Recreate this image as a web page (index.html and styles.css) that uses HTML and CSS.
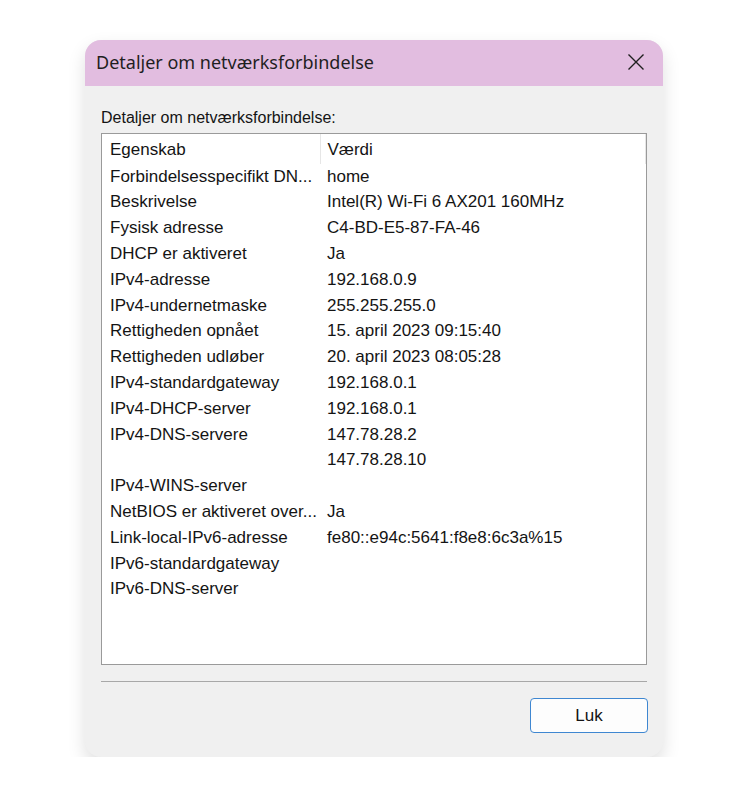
FILE: index.html
```html
<!DOCTYPE html>
<html lang="da">
<head>
  <meta charset="UTF-8" />
  <title>Detaljer om netværksforbindelse</title>
  <link rel="stylesheet" href="styles.css">
</head>
<body>
  <div class="dialog">
    <div class="titlebar">
      <span class="title">Detaljer om netværksforbindelse</span>
      <svg class="close" width="18" height="18" viewBox="0 0 18 18">
        <path d="M1.5 1.5 L16.5 16.5 M16.5 1.5 L1.5 16.5" stroke="#1f1f1f" stroke-width="1.4" fill="none"/>
      </svg>
    </div>
    <div class="content">
      <div class="label">Detaljer om netværksforbindelse:</div>
      <div class="listbox">
        <table class="details">
          <colgroup>
            <col class="col-prop">
            <col class="col-val">
          </colgroup>
          <thead>
            <tr><th>Egenskab</th><th>Værdi</th></tr>
          </thead>
          <tbody>
            <tr><td>Forbindelsesspecifikt DN...</td><td>home</td></tr>
            <tr><td>Beskrivelse</td><td>Intel(R) Wi-Fi 6 AX201 160MHz</td></tr>
            <tr><td>Fysisk adresse</td><td>C4-BD-E5-87-FA-46</td></tr>
            <tr><td>DHCP er aktiveret</td><td>Ja</td></tr>
            <tr><td>IPv4-adresse</td><td>192.168.0.9</td></tr>
            <tr><td>IPv4-undernetmaske</td><td>255.255.255.0</td></tr>
            <tr><td>Rettigheden opnået</td><td>15. april 2023 09:15:40</td></tr>
            <tr><td>Rettigheden udløber</td><td>20. april 2023 08:05:28</td></tr>
            <tr><td>IPv4-standardgateway</td><td>192.168.0.1</td></tr>
            <tr><td>IPv4-DHCP-server</td><td>192.168.0.1</td></tr>
            <tr><td>IPv4-DNS-servere</td><td>147.78.28.2</td></tr>
            <tr><td></td><td>147.78.28.10</td></tr>
            <tr><td>IPv4-WINS-server</td><td></td></tr>
            <tr><td>NetBIOS er aktiveret over...</td><td>Ja</td></tr>
            <tr><td>Link-local-IPv6-adresse</td><td>fe80::e94c:5641:f8e8:6c3a%15</td></tr>
            <tr><td>IPv6-standardgateway</td><td></td></tr>
            <tr><td>IPv6-DNS-server</td><td></td></tr>
          </tbody>
        </table>
      </div>
      <div class="separator"></div>
      <div class="buttons">
        <button class="btn">Luk</button>
      </div>
    </div>
  </div>
</body>
</html>
```

FILE: styles.css
```css
body {
  margin: 0;
  background-color: #ffffff;
  font-family: "Liberation Sans", Arial, sans-serif;
  color: #141414;
}

.dialog {
  width: 578px;
  margin: 40px 0 0 85px;
  background-color: #f0f0f0;
  border-radius: 16px;
  overflow: hidden;
  box-shadow: 0 8px 18px rgba(0, 0, 0, 0.13);
}

.titlebar {
  height: 46px;
  background-color: #e2bde0;
  display: flex;
  align-items: center;
  justify-content: space-between;
  padding: 0 18px 0 11px;
}

.title {
  font-family: "Noto Sans", sans-serif;
  font-size: 18px;
  color: #1f1f1f;
  margin-top: -2px;
}

.close {
  margin-top: -3px;
}

.content {
  padding: 23px 16px 24px 16px;
}

.label {
  font-size: 16px;
  line-height: 18px;
  margin-bottom: 6px;
}

.listbox {
  height: 530px;
  background-color: #ffffff;
  border: 1px solid #9a9a9a;
  font-size: 17px;
}

.details {
  table-layout: fixed;
  border-collapse: collapse;
  width: 543px;
}

.col-prop {
  width: 218px;
}

.col-val {
  width: 325px;
}

.details th,
.details td {
  height: 25.8px;
  padding: 0 0 0 7px;
  font-weight: normal;
  text-align: left;
  white-space: nowrap;
  overflow: hidden;
  vertical-align: middle;
}

.details th:first-child,
.details td:first-child {
  padding-left: 8px;
}

.details th {
  height: 29.8px;
  padding-top: 3px;
  box-sizing: border-box;
  border-right: 1px solid #e6e6e6;
}

.separator {
  margin-top: 16px;
  height: 1px;
  background-color: #a8a8a8;
}

.buttons {
  display: flex;
  justify-content: flex-end;
  margin-top: 16px;
  margin-right: -1px;
}

.btn {
  width: 118px;
  height: 35px;
  background-color: #fdfdfd;
  border: 1.5px solid #3f87d1;
  border-radius: 4px;
  font-family: "Liberation Sans", Arial, sans-serif;
  font-size: 17px;
  color: #141414;
}
```
